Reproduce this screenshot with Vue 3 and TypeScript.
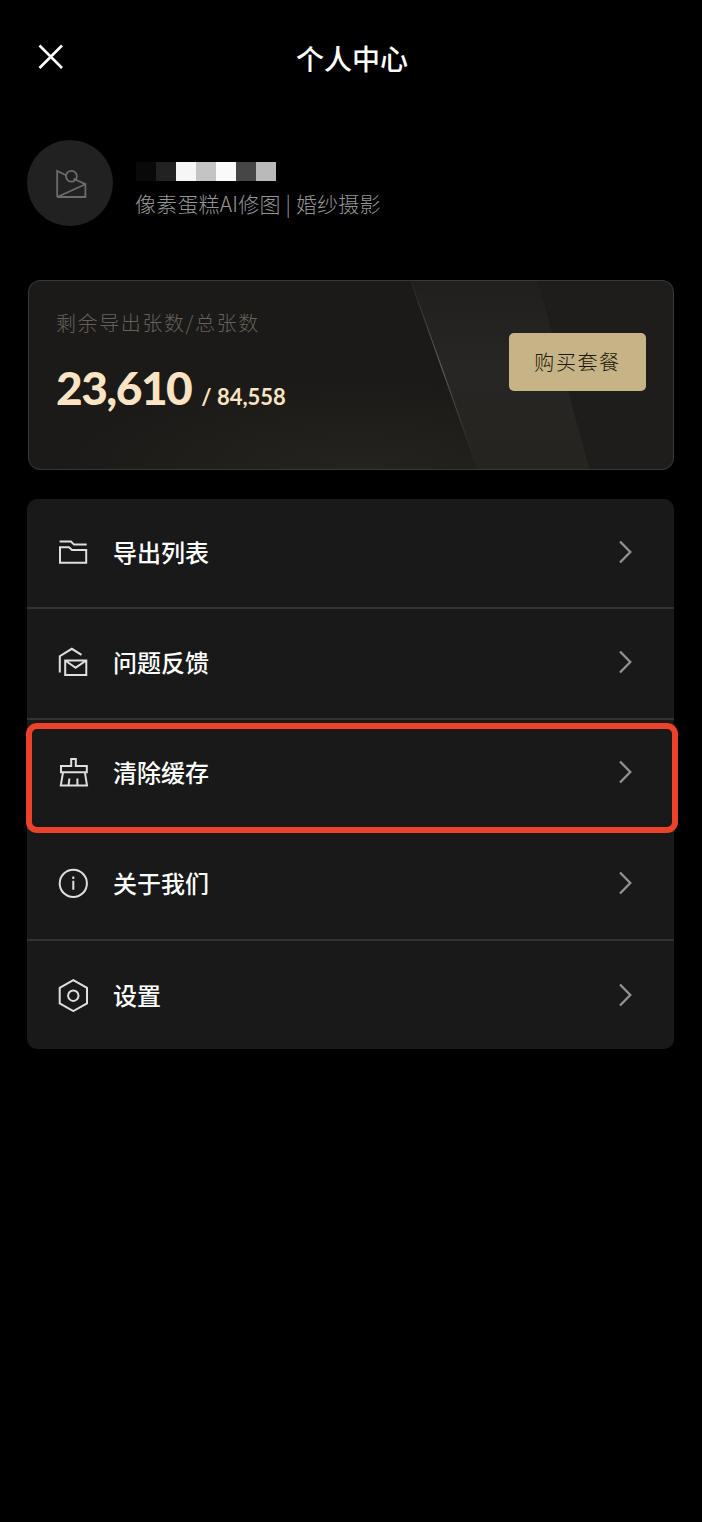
<script setup lang="ts">
interface MenuItem {
  id: string
  label: string
  highlighted?: boolean
}

const items: MenuItem[] = [
  { id: 'export', label: '导出列表' },
  { id: 'feedback', label: '问题反馈' },
  { id: 'cache', label: '清除缓存', highlighted: true },
  { id: 'about', label: '关于我们' },
  { id: 'settings', label: '设置' },
]
const nameBlocks: string[] = ['#090909', '#222222', '#f6f6f6', '#c4c4c4', '#fafafa', '#464646', '#bababa']
</script>

<template>
  <main class="page">
    <header class="bar">
      <svg class="close" viewBox="0 0 28 28"><path d="M2.5 2.5 25 25M25 2.5 2.5 25" /></svg>
      <h1>个人中心</h1>
      <span class="close"></span>
    </header>

    <section class="profile">
      <div class="avatar">
        <svg viewBox="0 0 86 86">
          <path d="M30.2 57V30.9L39 35.2M46.5 38.7 58.4 44.2V57H30.2L58.4 44.2" />
          <circle cx="44.4" cy="36.3" r="5.4" />
        </svg>
      </div>
      <div class="who">
        <div class="mask">
          <i v-for="(c, i) in nameBlocks" :key="i" :style="{ background: c }"></i>
        </div>
        <p>像素蛋糕AI修图 | 婚纱摄影</p>
      </div>
    </section>

    <section class="card">
      <svg class="sheen" viewBox="0 0 646 190" preserveAspectRatio="none">
        <defs>
          <linearGradient id="band" x1="0" y1="0" x2="0" y2="1">
            <stop offset="0" stop-color="#201f1e" />
            <stop offset=".45" stop-color="#282625" />
            <stop offset="1" stop-color="#25241f" />
          </linearGradient>
          <linearGradient id="edge" x1="0" y1="0" x2="0" y2="1">
            <stop offset="0" stop-color="#555" stop-opacity=".1" />
            <stop offset=".5" stop-color="#666460" />
            <stop offset="1" stop-color="#555" stop-opacity="0" />
          </linearGradient>
        </defs>
        <path d="M382 0H510L562 190H449Z" fill="url(#band)" />
        <path d="M510 0H646V190H562Z" fill="#1e1d1b" />
        <path d="M382 0 444 174 445 174 383 0Z" fill="url(#edge)" />
      </svg>
      <div class="quota">
        <p class="label">剩余导出张数/总张数</p>
        <p class="numbers"><strong>23,610</strong><span>/ 84,558</span></p>
      </div>
      <button type="button">购买套餐</button>
    </section>

    <nav class="menu">
      <div v-for="item in items" :key="item.id" class="row">
        <svg class="icon" viewBox="0 0 34 34">
          <template v-if="item.id === 'export'">
            <path d="M3.6 6.6H15L18 9.6H30.7M4 12.2H13L16 15H30.2V27.7H4Z" />
          </template>
          <template v-else-if="item.id === 'feedback'">
            <path d="M3.8 27.5V11.2L15.8 3.8 25.5 9.9M9.2 15.5H30.3V30H9.2ZM10 16 19.6 22.7 29.5 16" />
          </template>
          <template v-else-if="item.id === 'cache'">
            <path d="M15.2 11V3.9H19.8V11H30.8V17.3H5V11ZM7 17.3 4.8 30.4H31L28.9 17.3M13.4 23.5 12.6 30M21.4 23.5V30" />
          </template>
          <template v-else-if="item.id === 'about'">
            <circle cx="17.3" cy="17.4" r="13.6" /><path d="M17.3 14.7V23.8M17.3 10.6V13" />
          </template>
          <template v-else>
            <path d="M17.3 2.2 31 9.9V25.3L17.3 33 3.7 25.3V9.9Z" /><circle cx="17.3" cy="17.7" r="5.2" />
          </template>
        </svg>
        <span class="name">{{ item.label }}</span>
        <svg class="chevron" viewBox="0 0 16 26"><path d="M3 2.5 13.3 13 3 23.5" /></svg>
        <span v-if="item.highlighted" class="ring"></span>
      </div>
    </nav>
  </main>
</template>

<style>
body { background: #000; }
</style>

<style scoped>
.page {
  box-sizing: border-box;
  min-height: 1522px;
  padding: 0 28px 0 27px;
  background: #000;
  color: #fff;
  font-family: "Noto Sans CJK SC", sans-serif;
}
svg { display: block; fill: none; }
p, h1 { margin: 0; }
.bar {
  display: flex;
  justify-content: space-between;
  align-items: center;
  height: 113px;
  padding: 0 7px 0 10px;
}
.close { width: 28px; height: 28px; stroke: #fff; stroke-width: 2.6; }
h1 { font-size: 28px; line-height: 40px; font-weight: 500; padding-top: 2px; }
.profile { display: flex; height: 86px; margin-top: 27px; }
.avatar { width: 86px; height: 86px; border-radius: 50%; background: #212121; }
.avatar svg { stroke: #6c6c6c; stroke-width: 1.8; }
.who { padding: 22px 0 0 22px; }
.mask { display: flex; height: 19px; margin-left: 1px; }
.mask i { width: 20px; }
.who p {
  margin-top: 7px;
  font-size: 21px;
  line-height: 30px;
  font-weight: 300;
  letter-spacing: .2px;
  color: #959595;
  white-space: nowrap;
}
.card {
  position: relative;
  display: flex;
  justify-content: space-between;
  box-sizing: border-box;
  height: 190px;
  margin: 54px 0 0 1px;
  padding: 0 28px;
  border-radius: 12px;
  overflow: hidden;
  background: radial-gradient(ellipse 300px 90px at 330px 190px, #24231e, transparent), #1b1a18;
}
.card::after {
  content: "";
  position: absolute;
  inset: 0;
  border: 1px solid #3a3937;
  border-radius: 12px;
}
.sheen { position: absolute; inset: 0; width: 100%; height: 100%; }
.quota { position: relative; padding-top: 28px; white-space: nowrap; }
.label { font-size: 20px; line-height: 30px; font-weight: 300; letter-spacing: 1.6px; color: #65605a; }
.numbers {
  display: flex;
  align-items: baseline;
  margin-top: 20px;
  line-height: 60px;
  font-family: Lato, sans-serif;
  font-weight: 700;
  color: #fce3c3;
}
.numbers strong { font-size: 46px; letter-spacing: -1.5px; }
.numbers span { margin-left: 10px; font-size: 22px; }
.card button {
  position: relative;
  width: 137px;
  height: 58px;
  margin: 53px 0 0;
  padding: 0;
  border: 0;
  border-radius: 5px;
  background: #c7b486;
  color: #211608;
  font: 300 20px/58px "Noto Sans CJK SC", sans-serif;
  letter-spacing: 1.6px;
}
.menu { margin-top: 29px; border-radius: 10px; background: #191919; }
.row {
  position: relative;
  display: flex;
  align-items: center;
  box-sizing: border-box;
  height: 110.4px;
  padding: 0 41px 3px 29px;
  border-bottom: 2px solid #323232;
}
.row:last-child { height: 108px; border: 0; padding-bottom: 0; }
.icon { width: 34px; height: 34px; stroke: #dfdfdf; stroke-width: 2; }
.name { flex: 1; margin-left: 23px; font-size: 24px; line-height: 36px; font-weight: 500; }
.chevron { width: 16px; height: 26px; stroke: #929292; stroke-width: 2.3; }
.ring {
  position: absolute;
  z-index: 1;
  left: -1px;
  right: -4px;
  top: 3px;
  height: 110px;
  box-sizing: border-box;
  border: 6px solid #ed422a;
  border-radius: 11px;
}
</style>
